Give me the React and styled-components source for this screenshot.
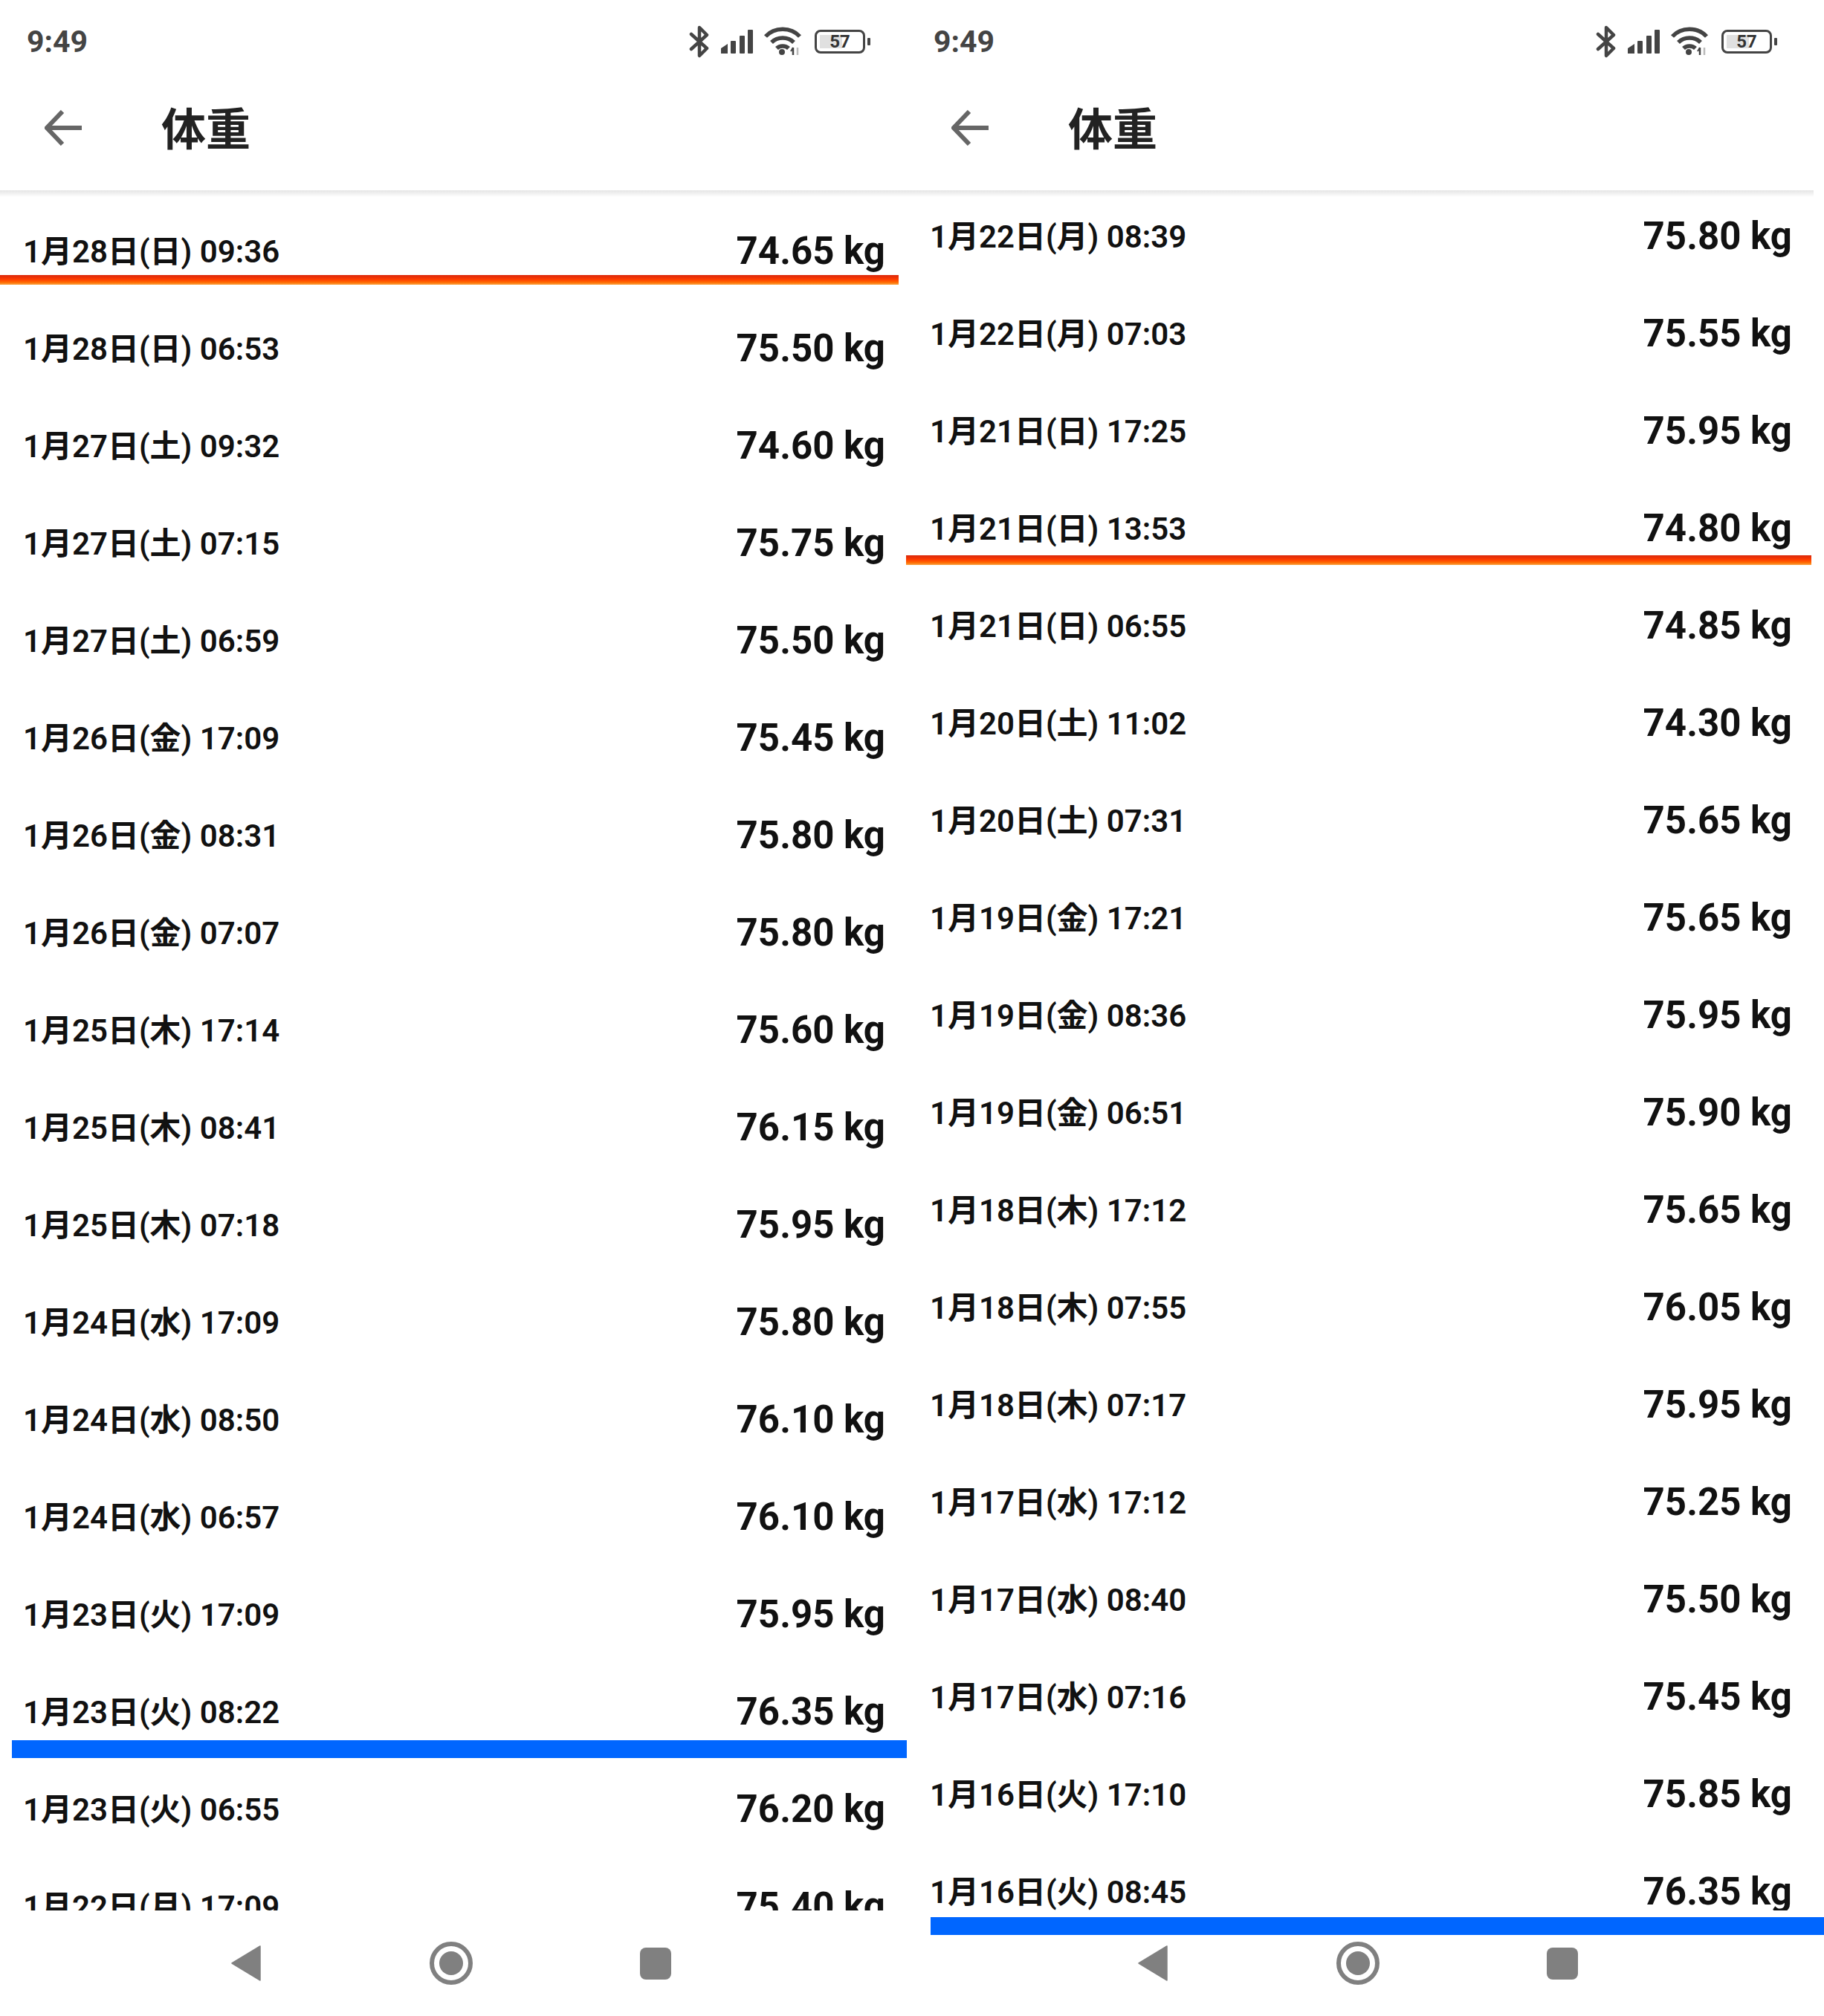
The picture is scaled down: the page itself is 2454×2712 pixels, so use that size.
import React from "react";
import styled, { createGlobalStyle } from "styled-components";

const leftRows = [
  ["1月28日(日) 09:36", "74.65 kg"],
  ["1月28日(日) 06:53", "75.50 kg"],
  ["1月27日(土) 09:32", "74.60 kg"],
  ["1月27日(土) 07:15", "75.75 kg"],
  ["1月27日(土) 06:59", "75.50 kg"],
  ["1月26日(金) 17:09", "75.45 kg"],
  ["1月26日(金) 08:31", "75.80 kg"],
  ["1月26日(金) 07:07", "75.80 kg"],
  ["1月25日(木) 17:14", "75.60 kg"],
  ["1月25日(木) 08:41", "76.15 kg"],
  ["1月25日(木) 07:18", "75.95 kg"],
  ["1月24日(水) 17:09", "75.80 kg"],
  ["1月24日(水) 08:50", "76.10 kg"],
  ["1月24日(水) 06:57", "76.10 kg"],
  ["1月23日(火) 17:09", "75.95 kg"],
  ["1月23日(火) 08:22", "76.35 kg"],
  ["1月23日(火) 06:55", "76.20 kg"],
  ["1月22日(月) 17:09", "75.40 kg"],
];

const rightRows = [
  ["1月22日(月) 08:39", "75.80 kg"],
  ["1月22日(月) 07:03", "75.55 kg"],
  ["1月21日(日) 17:25", "75.95 kg"],
  ["1月21日(日) 13:53", "74.80 kg"],
  ["1月21日(日) 06:55", "74.85 kg"],
  ["1月20日(土) 11:02", "74.30 kg"],
  ["1月20日(土) 07:31", "75.65 kg"],
  ["1月19日(金) 17:21", "75.65 kg"],
  ["1月19日(金) 08:36", "75.95 kg"],
  ["1月19日(金) 06:51", "75.90 kg"],
  ["1月18日(木) 17:12", "75.65 kg"],
  ["1月18日(木) 07:55", "76.05 kg"],
  ["1月18日(木) 07:17", "75.95 kg"],
  ["1月17日(水) 17:12", "75.25 kg"],
  ["1月17日(水) 08:40", "75.50 kg"],
  ["1月17日(水) 07:16", "75.45 kg"],
  ["1月16日(火) 17:10", "75.85 kg"],
  ["1月16日(火) 08:45", "76.35 kg"],
];

function StatusIcons() {
  return (
    <Icons>
      <svg width="28" height="44" viewBox="0 0 28 44" fill="none" stroke="#444" strokeWidth="4.5">
        <path d="M3 12 L24 31 L14 41 L14 3 L24 13 L3 32" strokeLinejoin="round" strokeLinecap="round" />
      </svg>
      <svg width="44" height="34" viewBox="0 0 44 34" fill="#444">
        <path d="M1 33 V26 L10 20 V33 Z" />
        <rect x="14" y="16" width="7" height="17" rx="1" />
        <rect x="26" y="9" width="7" height="24" rx="1" />
        <rect x="37" y="1" width="7" height="32" rx="1" />
      </svg>
      <svg width="52" height="40" viewBox="0 0 52 40" fill="none" stroke="#444" strokeWidth="5.5">
        <path d="M3 13 C15 0 37 0 49 13" />
        <path d="M11 21 C19 13 33 13 41 21" />
        <path d="M18 29 C22 25 30 25 34 29" />
        <circle cx="25" cy="34" r="3" fill="#444" strokeWidth="2" />
        <path d="M40 38 V28" strokeWidth="2.5" />
        <path d="M37 33 L40 28" strokeWidth="2" />
        <path d="M46 28 V38" stroke="#bbb" strokeWidth="2.5" />
      </svg>
      <Battery>
        <BatteryFill />
        <BatteryLabel>57</BatteryLabel>
        <BatteryNub />
      </Battery>
    </Icons>
  );
}

function Phone({ rows, offset, children }) {
  return (
    <PhoneFrame>
      <StatusBar>
        <Clock>9:49</Clock>
        <StatusIcons />
      </StatusBar>
      <Header>
        <svg width="50" height="48" viewBox="0 0 50 48" fill="none" stroke="#666" strokeWidth="6">
          <path d="M24 2 L3 24 L24 46" />
          <path d="M4 24 H50" />
        </svg>
        <Title>体重</Title>
      </Header>
      <List>
        <ListInner $offset={offset}>
          {rows.map(([date, value]) => (
            <Row key={date}>
              <DateText>{date}</DateText>
              <Value>{value}</Value>
            </Row>
          ))}
        </ListInner>
      </List>
      <NavBar>
        <NavCell>
          <BackIcon width="40" height="48" viewBox="0 0 40 48" fill="#808080">
            <path d="M39 1 V47 L1 24 Z" stroke="#808080" strokeWidth="1.5" strokeLinejoin="round" />
          </BackIcon>
        </NavCell>
        <NavCell>
          <HomeRing>
            <HomeDot />
          </HomeRing>
        </NavCell>
        <NavCell>
          <RecentSquare />
        </NavCell>
      </NavBar>
      {children}
    </PhoneFrame>
  );
}

export default function App() {
  return (
    <>
      <GlobalStyle />
      <Page>
        <Phone rows={leftRows} offset={16}>
          <Mark $kind="peak" $top={370} $left={0} $width={1209} />
          <Mark $kind="blue" $top={2341} $left={16} $width={1204} />
        </Phone>
        <Phone rows={rightRows} offset={-4}>
          <Mark $kind="peak" $top={747} $left={-1} $width={1218} />
          <Mark $kind="blue" $top={2579} $left={32} $width={1202} />
        </Phone>
      </Page>
    </>
  );
}

const GlobalStyle = createGlobalStyle`
  html, body {
    margin: 0;
    padding: 0;
    background: #fff;
  }
  body {
    font-family: Roboto, "Noto Sans CJK JP", sans-serif;
  }
`;

const Page = styled.div`
  display: flex;
  width: 2454px;
  height: 2712px;
  background: #fff;
  overflow: hidden;
`;

const PhoneFrame = styled.div`
  position: relative;
  display: flex;
  flex-direction: column;
  width: 1220px;
  height: 2712px;
  flex: none;
`;

const StatusBar = styled.div`
  display: flex;
  justify-content: space-between;
  align-items: center;
  height: 112px;
  padding: 0 56px 0 36px;
  box-sizing: border-box;
`;

const Clock = styled.span`
  font-size: 41px;
  font-weight: 700;
  color: #444;
`;

const Icons = styled.div`
  display: flex;
  align-items: center;
  gap: 14px;
`;

const Battery = styled.div`
  position: relative;
  display: flex;
  align-items: center;
  justify-content: center;
  width: 68px;
  height: 32px;
  margin-left: 3px;
  box-sizing: border-box;
  border: 3px solid #444;
  border-radius: 8px;
`;

const BatteryFill = styled.div`
  position: absolute;
  left: 4px;
  top: 4px;
  bottom: 4px;
  width: 30px;
  background: #e0e0e0;
`;

const BatteryLabel = styled.span`
  position: relative;
  font-size: 24px;
  font-weight: 700;
  color: #333;
`;

const BatteryNub = styled.div`
  position: absolute;
  right: -10px;
  top: 8px;
  width: 4px;
  height: 10px;
  background: #444;
  border-radius: 1px;
`;

const Header = styled.div`
  position: relative;
  z-index: 1;
  display: flex;
  align-items: center;
  gap: 107px;
  height: 144px;
  padding: 0 0 24px 60px;
  box-sizing: border-box;
  background: #fff;

  &::after {
    content: "";
    position: absolute;
    left: 0;
    right: 0;
    top: 100%;
    height: 9px;
    background: linear-gradient(180deg, rgba(0, 0, 0, 0.1), rgba(0, 0, 0, 0));
  }
`;

const Title = styled.h1`
  margin: 8px 0 0;
  font-size: 60px;
  font-weight: 700;
  line-height: 1;
  color: #222;
`;

const List = styled.div`
  flex: 1;
  overflow: hidden;
`;

const ListInner = styled.div`
  margin-top: ${(p) => p.$offset}px;
`;

const Row = styled.div`
  display: flex;
  justify-content: space-between;
  align-items: center;
  height: 131px;
  padding: 0 29px 0 31px;
  color: #111;
`;

const DateText = styled.span`
  position: relative;
  top: -3px;
  font-size: 42px;
  font-weight: 600;
`;

const Value = styled.span`
  font-size: 51px;
  font-weight: 700;
`;

const NavBar = styled.div`
  display: flex;
  justify-content: center;
  align-items: center;
  gap: 215px;
  height: 142px;
  flex: none;
  padding-right: 6px;
  box-sizing: border-box;
`;

const NavCell = styled.div`
  display: flex;
  justify-content: center;
  align-items: center;
  width: 60px;
`;

const BackIcon = styled.svg`
  margin-right: 3px;
`;

const HomeRing = styled.div`
  display: flex;
  justify-content: center;
  align-items: center;
  width: 58px;
  height: 58px;
  box-sizing: border-box;
  border: 6px solid #808080;
  border-radius: 50%;
`;

const HomeDot = styled.div`
  width: 32px;
  height: 32px;
  background: #808080;
  border-radius: 50%;
`;

const RecentSquare = styled.div`
  width: 42px;
  height: 43px;
  background: #808080;
  border-radius: 8px;
`;

const Mark = styled.div`
  position: absolute;
  z-index: 2;
  top: ${(p) => p.$top}px;
  left: ${(p) => p.$left}px;
  width: ${(p) => p.$width}px;
  height: ${(p) => (p.$kind === "blue" ? 24 : 13)}px;
  background: ${(p) =>
    p.$kind === "blue"
      ? "#0066ff"
      : "linear-gradient(180deg, #d9280c 0%, #ff3c00 45%, #ff6a00 75%, #f8a340 100%)"};
`;
